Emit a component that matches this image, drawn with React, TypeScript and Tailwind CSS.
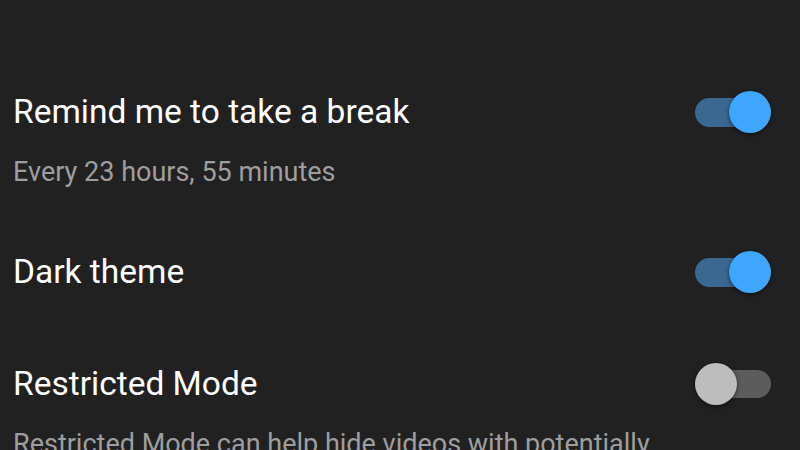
import React, { useState } from 'react';

function Toggle({ on, onChange }: { on: boolean; onChange: () => void }) {
  return (
    <button
      onClick={onChange}
      className="relative w-[76px] h-[42px] flex items-center shrink-0"
    >
      <span
        className={
          on
            ? 'block w-full h-[29px] rounded-full bg-[#3a6892]'
            : 'block w-full h-[28px] rounded-full bg-[#5c5c5c]'
        }
      />
      <span
        className={
          on
            ? 'absolute right-0 top-0 w-[42px] h-[42px] rounded-full bg-[#3ea6ff] shadow-[0_1px_4px_rgba(0,0,0,0.6)]'
            : 'absolute left-0 top-0 w-[42px] h-[42px] rounded-full bg-[#bdbdbd] shadow-[0_1px_4px_rgba(0,0,0,0.6)]'
        }
      />
    </button>
  );
}

export default function App() {
  const [breakOn, setBreakOn] = useState(true);
  const [dark, setDark] = useState(true);
  const [restricted, setRestricted] = useState(false);

  return (
    <div className="w-[800px] h-[450px] overflow-hidden bg-[#212121] font-['Roboto',sans-serif] pl-[13px] pr-[29px] pt-[91px]">
      {/* Remind me to take a break */}
      <div className="flex items-center justify-between">
        <p className="text-white text-[33.5px] leading-[42px]">Remind me to take a break</p>
        <Toggle on={breakOn} onChange={() => setBreakOn(!breakOn)} />
      </div>
      <p className="text-[#9e9e9e] text-[27px] leading-[30px] mt-[24px]">Every 23 hours, 55 minutes</p>

      {/* Dark theme */}
      <div className="flex items-center justify-between mt-[64px]">
        <p className="text-white text-[33.5px] leading-[42px]">Dark theme</p>
        <Toggle on={dark} onChange={() => setDark(!dark)} />
      </div>

      {/* Restricted Mode */}
      <div className="flex items-center justify-between mt-[70px]">
        <p className="text-white text-[33.5px] leading-[42px]">Restricted Mode</p>
        <Toggle on={restricted} onChange={() => setRestricted(!restricted)} />
      </div>
      <p className="text-[#9e9e9e] text-[27px] leading-[30px] mt-[24px] whitespace-nowrap">
        Restricted Mode can help hide videos with potentially
      </p>
    </div>
  );
}
